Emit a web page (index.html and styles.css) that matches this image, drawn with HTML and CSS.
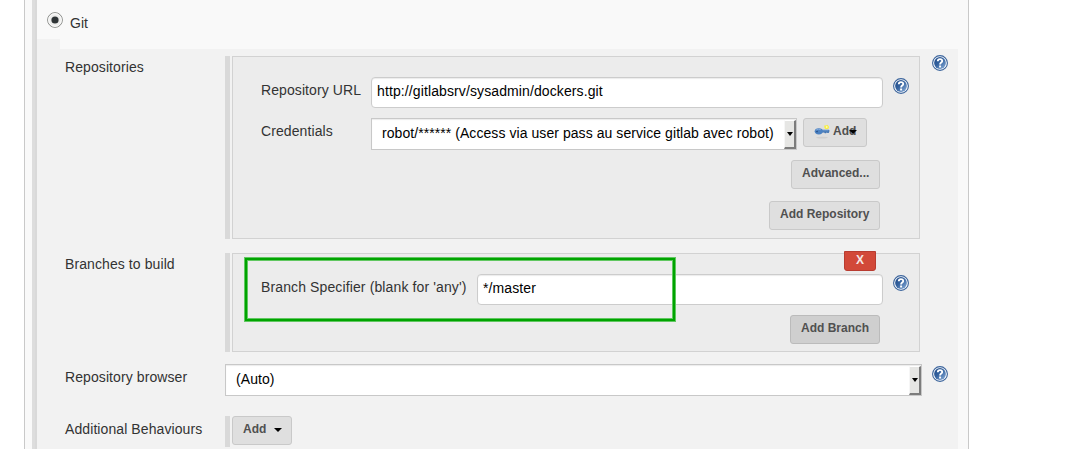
FILE: index.html
```html
<!DOCTYPE html>
<html lang="en">
<head>
<meta charset="utf-8">
<title>Source Code Management</title>
<link rel="stylesheet" href="styles.css">
</head>
<body>
<svg class="defs" width="0" height="0">
  <defs>
    <linearGradient id="blue" x1="0" y1="0" x2="1" y2="1">
      <stop offset="0" stop-color="#204a87"/><stop offset=".45" stop-color="#34629f"/><stop offset="1" stop-color="#8fb2dc"/>
    </linearGradient>
    <symbol id="help" viewBox="0 0 16 16">
      <circle cx="8" cy="8" r="7.4" fill="#fff" stroke="#3a639b" stroke-width="1.1"/>
      <circle cx="8" cy="8" r="5.9" fill="url(#blue)"/>
      <path d="M5.8 6.3C5.8 3.5 10.2 3.4 10.2 5.9C10.2 7.6 8.1 7.6 8.1 9.4" fill="none" stroke="#fff" stroke-width="1.9"/>
      <path d="M7.1 10.5h2v2h-2z" fill="#fff"/>
    </symbol>
  </defs>
</svg>
<main class="panel">
  <div class="rail"></div>
  <div class="content">
    <label class="scm">
      <svg class="radio" viewBox="0 0 16 16"><circle cx="8" cy="8" r="7.4" fill="#ececeb" stroke="#8c8e8b"/><circle cx="8" cy="8" r="6.3" fill="none" stroke="#fff"/><circle cx="8" cy="8" r="3.6" fill="#2e3436"/></svg>
      <span>Git</span>
    </label>
    <div class="notch"></div>
    <div class="settings">
      <section class="setting repositories">
        <span class="label">Repositories</span>
        <div class="group">
          <div class="box">
            <div class="field">
              <span class="name">Repository URL</span>
              <div class="input url"><span>http://gitlabsrv/sysadmin/dockers.git</span></div>
              <svg class="help"><use href="#help"/></svg>
            </div>
            <div class="field">
              <span class="name">Credentials</span>
              <div class="select credentials"><span>robot/****** (Access via user pass au service gitlab avec robot)</span><i class="drop"></i></div>
              <div class="button add-key">
                <svg class="key" viewBox="0 0 16 16"><ellipse cx="8" cy="13.6" rx="6" ry=".8" fill="#cfcfcf"/><path d="M5.5 5.7h9.3l.8 1-.9 2.3h-1.3l-.5-.7-.8.9h-1.2l-.7-.8H6z" fill="#4275b3"/><path d="M6 6.8h8.5" stroke="#6f9bd0"/><ellipse cx="4.8" cy="7.3" rx="4.1" ry="3.1" fill="#4c82c2"/><path d="M1.8 6.2q2.5-1.8 5-.5" stroke="#7fa9db" fill="none"/><circle cx="3" cy="7.6" r=".8" fill="#20487f"/><path d="M10.6 1.2l1.5.4 1.2-.8 1 1 .9 1.1-.5 1.5-1.3.7-1.6.2-1.2-1.1-.4-1.3z" fill="#f7ee45"/><circle cx="12.7" cy="3" r=".9" fill="#fffbb0"/></svg>
                <span>Add</span><i class="arrow"></i>
              </div>
            </div>
            <div class="button advanced"><span>Advanced...</span></div>
            <div class="button add-repo"><span>Add Repository</span></div>
          </div>
        </div>
        <svg class="help"><use href="#help"/></svg>
      </section>
      <section class="setting branches">
        <span class="label">Branches to build</span>
        <div class="group">
          <div class="box">
            <div class="delete">X</div>
            <div class="marker"></div>
            <div class="field">
              <span class="name wide">Branch Specifier (blank for 'any')</span>
              <div class="input branch"><span>*/master</span></div>
              <svg class="help"><use href="#help"/></svg>
            </div>
            <div class="button add-branch"><span>Add Branch</span></div>
          </div>
        </div>
      </section>
      <section class="setting browser">
        <span class="label">Repository browser</span>
        <div class="select auto"><span>(Auto)</span><i class="drop"></i></div>
        <svg class="help"><use href="#help"/></svg>
      </section>
      <section class="setting behaviours">
        <span class="label">Additional Behaviours</span>
        <div class="group"><div class="button add-behaviour"><span>Add</span><i class="arrow"></i></div></div>
      </section>
    </div>
  </div>
</main>
</body>
</html>
```
FILE: styles.css
```css
* { box-sizing: border-box; }
body {
  margin: 0;
  height: 449px;
  overflow: hidden;
  background: #fff;
  color: #333;
  font: 14px/16px "Liberation Sans", Arial, sans-serif;
  white-space: nowrap;
}
.defs { position: absolute; }
.panel {
  display: flex;
  width: 945px;
  height: 449px;
  margin-left: 24px;
  background: #f9f9f9;
  border: solid #c9c9c9;
  border-width: 0 1px;
}
.rail { width: 5px; margin-left: 7px; background: linear-gradient(to right, #ddd 3px, #d9d9d9 3px); }
.content { width: 921px; }
.scm { display: flex; height: 39px; padding: 12px 0 0 10px; gap: 7px; }
.scm span { padding-top: 3px; }
.radio { width: 16px; height: 16px; }
.notch { width: 23px; height: 10px; background: #f2f2f2; }
.settings { height: 400px; padding: 7px 0 0 28px; background: #f2f2f2; }
.setting { display: flex; }
.label { width: 160px; padding-top: 3px; letter-spacing: .09px; }
.help { width: 16px; height: 16px; }
.group { display: flex; height: 100%; padding-left: 2px; border-left: 5px solid #d9d9d9; }
.box { position: relative; display: flex; flex-direction: column; width: 688px; padding: 20px 0 0 28px; gap: 10px; background: #ececec; border: 1px solid #d2d2d2; }
.repositories { height: 183px; }
.repositories > .help { margin: -1px 0 0 12px; }
.branches { height: 99px; margin-top: 14px; }
.browser { height: 32px; margin-top: 12px; }
.browser .label { padding-top: 5px; }
.browser .help { margin: 2px 0 0 11px; }
.behaviours { height: 31px; margin-top: 20px; }
.behaviours .label { padding-top: 5px; }
.field { display: flex; }
.name { width: 110px; padding-top: 5px; letter-spacing: .09px; }
.name.wide { width: 216px; letter-spacing: .12px; }
.input { display: flex; height: 31px; padding: 5px; color: #000; background: #fff; border: 1px solid #ccc; border-radius: 4px; box-shadow: inset 0 1px 1px rgba(0,0,0,.08); letter-spacing: .11px; }
.url { width: 512px; }
.branch { width: 406px; }
.field .help { margin: 1px 0 0 10px; }
.select { display: flex; justify-content: space-between; height: 32px; padding: 1px 0 1px 10px; color: #000; background: #fff; border: 1px solid #c8c8c8; box-shadow: inset 0 1px 1px rgba(0,0,0,.08); letter-spacing: .065px; }
.select span { padding-top: 5px; }
.credentials { width: 426px; }
.auto { width: 697px; }
.browser .auto + .help { margin-left: 10px; }
.drop { display: flex; align-items: center; justify-content: center; width: 12px; height: 29px; background: #e6e6e4; border: solid; border-width: 1px 2px 2px 1px; border-color: #fff #7c7c7c #7c7c7c #f6f6f6; }
.drop::after { content: ""; border: solid transparent; border-width: 4px 3px 0; border-top-color: #000; }
.button { display: flex; height: 29px; padding: 4px 10px; font-size: 12px; font-weight: bold; color: #505050; background: #dfdfdf; border: 1px solid #c9c9c9; border-radius: 3px; }
.add-key { width: 64px; margin-left: 6px; }
.key { width: 16px; height: 16px; margin: 1px 3px 0 0; flex: none; }
.add-key .key { margin-right: 3px; }
.arrow { width: 8px; height: 4px; margin: 7px 0 0 8px; border: solid transparent; border-width: 4px 4px 0; border-top-color: #000; flex: none; }
.add-key .arrow { margin-left: -7px; }
.advanced { width: 89px; margin-left: 530px; }
.add-repo { width: 111px; margin: 2px 0 0 508px; }
.add-branch { width: 90px; margin-left: 529px; background: #cfcfcf; border-color: #bbb; }
.add-behaviour { width: 60px; }
.delete { position: absolute; left: 611px; top: -3px; width: 32px; height: 20px; font: bold 12px/17px "Liberation Sans", Arial, sans-serif; text-align: center; color: #f5e6e4; background: #d24939; border: 1px solid #b83c30; border-radius: 0 0 3px 3px; }
.marker { position: absolute; z-index: 1; left: 11px; top: 3px; width: 432px; height: 65px; border: 1px solid #61c761; box-shadow: inset 0 0 0 2px #00a400, inset 0 0 0 3px #61c761; }
```
